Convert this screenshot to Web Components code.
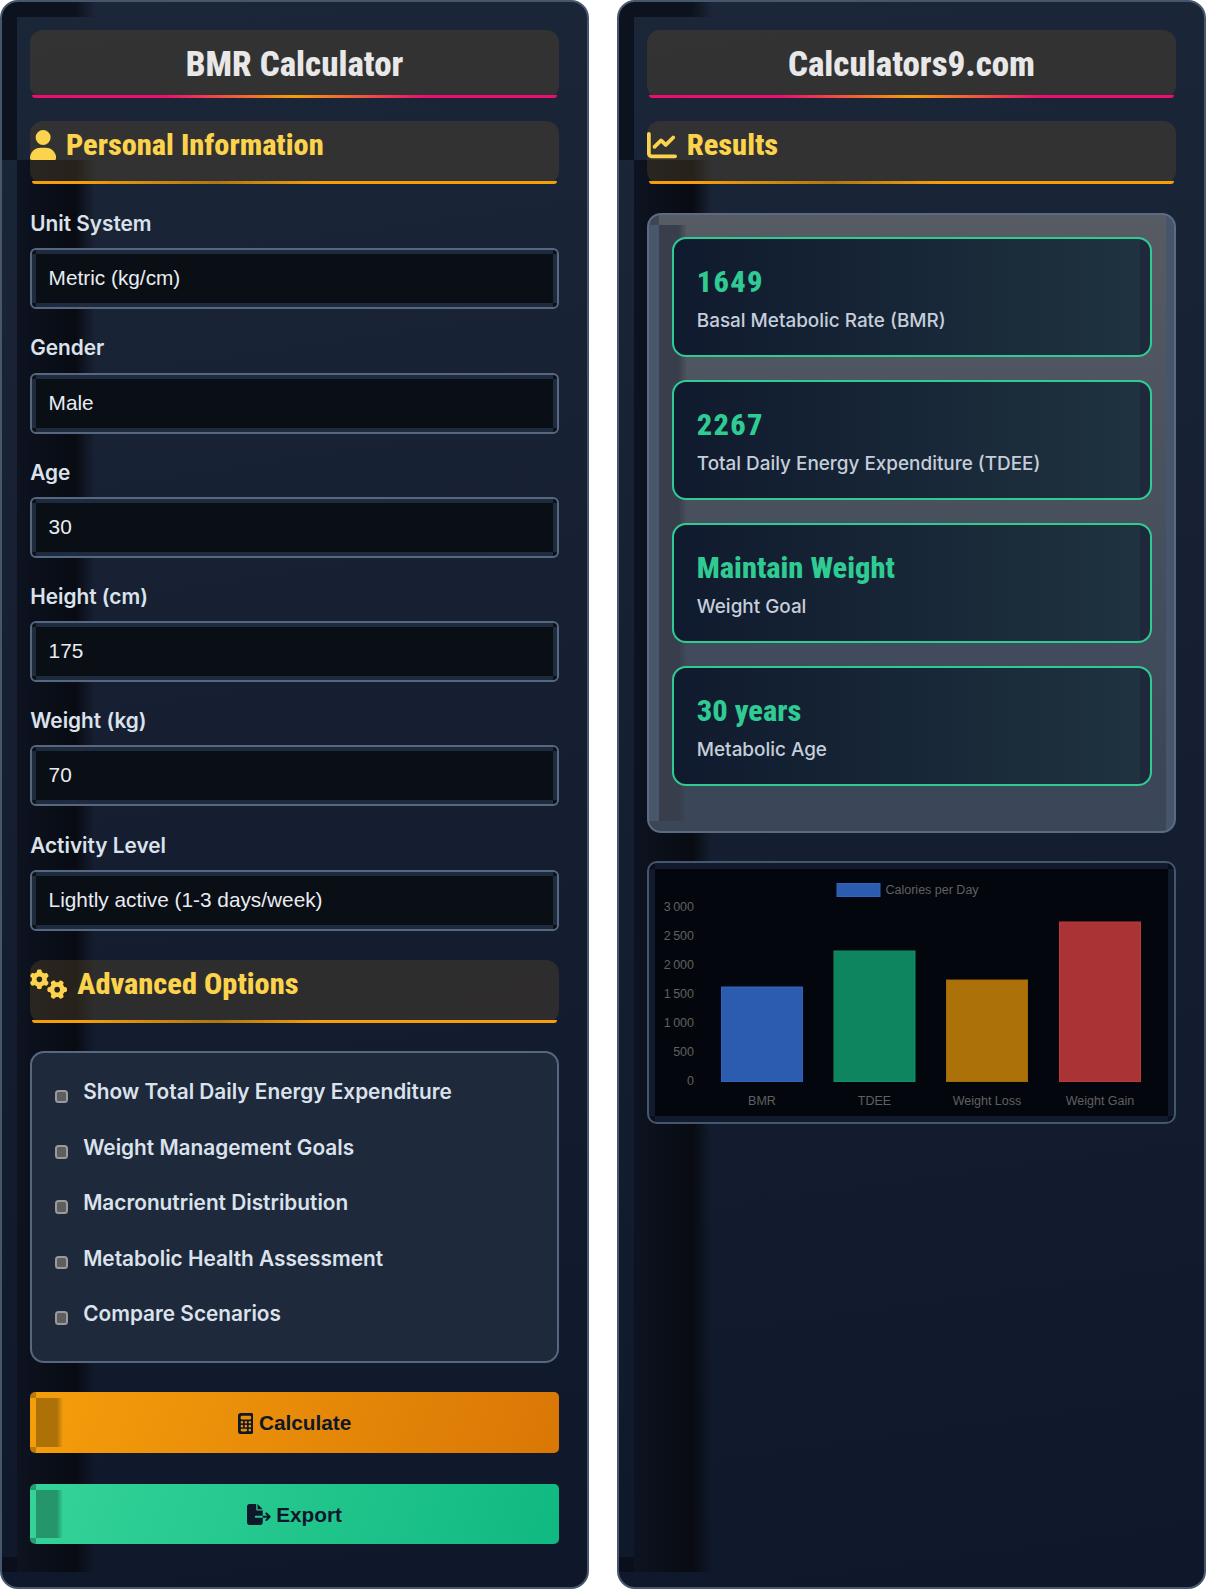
<!DOCTYPE html>
<html lang="en">
<head>
<meta charset="utf-8">
<title>BMR Calculator</title>
<style>
  html, body { margin: 0; padding: 0; background: #fff; }
  body { font-family: Inter, "Liberation Sans", sans-serif; }
  .page { display: grid; grid-template-columns: 589px 589px; gap: 28px; width: 1206px; height: 1589px; }
</style>
</head>
<body>
<div class="page">
  <calc-panel>
    <page-title>BMR Calculator</page-title>
    <section-title icon="user">Personal Information</section-title>
    <calc-field label="Unit System" value="Metric (kg/cm)"></calc-field>
    <calc-field label="Gender" value="Male"></calc-field>
    <calc-field label="Age" value="30"></calc-field>
    <calc-field label="Height (cm)" value="175"></calc-field>
    <calc-field label="Weight (kg)" value="70"></calc-field>
    <calc-field label="Activity Level" value="Lightly active (1-3 days/week)"></calc-field>
    <section-title icon="gears" style="margin-top:29px">Advanced Options</section-title>
    <option-list>
      <option-row>Show Total Daily Energy Expenditure</option-row>
      <option-row>Weight Management Goals</option-row>
      <option-row>Macronutrient Distribution</option-row>
      <option-row>Metabolic Health Assessment</option-row>
      <option-row>Compare Scenarios</option-row>
    </option-list>
    <action-button icon="calculator" kind="orange">Calculate</action-button>
    <action-button icon="export" kind="green">Export</action-button>
  </calc-panel>
  <calc-panel>
    <page-title>Calculators9.com</page-title>
    <section-title icon="chart">Results</section-title>
    <results-box>
      <result-card value="1649" digits>Basal Metabolic Rate (BMR)</result-card>
      <result-card value="2267" digits>Total Daily Energy Expenditure (TDEE)</result-card>
      <result-card value="Maintain Weight">Weight Goal</result-card>
      <result-card value="30 years">Metabolic Age</result-card>
    </results-box>
    <bar-chart></bar-chart>
  </calc-panel>
</div>

<script>
const ICONS = {
  user: ["0 0 448 512", "M224 256A128 128 0 1 0 224 0a128 128 0 1 0 0 256zm-45.7 48C79.8 304 0 383.8 0 482.3C0 498.7 13.3 512 29.7 512H418.3c16.4 0 29.7-13.3 29.7-29.7C448 383.8 368.2 304 269.7 304H178.3z"],
  chart: ["0 0 512 512", "M64 64c0-17.7-14.3-32-32-32S0 46.3 0 64V400c0 44.2 35.8 80 80 80H480c17.7 0 32-14.3 32-32s-14.3-32-32-32H80c-8.8 0-16-7.2-16-16V64zm406.6 86.6c12.5-12.5 12.5-32.8 0-45.3s-32.8-12.5-45.3 0L320 210.7l-57.4-57.4c-12.5-12.5-32.8-12.5-45.3 0l-112 112c-12.5 12.5-12.5 32.8 0 45.3s32.8 12.5 45.3 0L240 221.3l57.4 57.4c12.5 12.5 32.8 12.5 45.3 0l128-128z"],
  gears: ["0 0 640 512", "M308.5 135.3c7.1-6.3 9.9-16.2 6.2-25c-2.3-5.3-4.8-10.5-7.6-15.5L304 89.4c-3-5-6.3-9.9-9.8-14.6c-5.7-7.6-15.7-10.1-24.7-7.1l-28.2 9.3c-10.7-8.8-23-16-36.2-20.9L198 27.2c-1.9-9.3-9.1-16.7-18.5-17.8C173.9 8.9 167.2 8 160.4 8h-.7c-6.8 0-13.5 .4-20.1 1.2c-9.4 1.1-16.6 8.6-18.5 17.8L115 56.1c-13.3 5-25.5 12.1-36.2 20.9L50.5 67.8c-9-3-19-.5-24.7 7.1c-3.5 4.7-6.8 9.6-9.9 14.6l-3 5.3c-2.8 5-5.3 10.2-7.6 15.6c-3.7 8.7-.9 18.6 6.2 25l22.2 19.8C32.6 161.9 32 168.9 32 176s.6 14.1 1.7 20.9L11.5 216.7c-7.1 6.3-9.9 16.2-6.2 25c2.3 5.3 4.8 10.5 7.6 15.6l3 5.2c3 5.1 6.3 9.9 9.9 14.6c5.7 7.6 15.7 10.1 24.7 7.1l28.2-9.3c10.7 8.8 23 16 36.2 20.9l6.1 29.1c1.9 9.3 9.1 16.7 18.5 17.8c6.7 .8 13.5 1.2 20.4 1.2s13.7-.4 20.4-1.2c9.4-1.1 16.6-8.6 18.5-17.8l6.1-29.1c13.3-5 25.5-12.1 36.2-20.9l28.2 9.3c9 3 19 .5 24.7-7.1c3.5-4.7 6.8-9.5 9.8-14.6l3.1-5.4c2.8-5 5.3-10.2 7.6-15.5c3.7-8.7 .9-18.6-6.2-25l-22.2-19.8c1.1-6.8 1.7-13.8 1.7-20.9s-.6-14.1-1.7-20.9l22.2-19.8zM112 176a48 48 0 1 1 96 0 48 48 0 1 1 -96 0zM504.7 500.5c6.3 7.1 16.2 9.9 25 6.2c5.3-2.3 10.5-4.8 15.5-7.6l5.4-3.1c5-3 9.9-6.3 14.6-9.8c7.6-5.7 10.1-15.7 7.1-24.7l-9.3-28.2c8.8-10.7 16-23 20.9-36.2l29.1-6.1c9.3-1.9 16.7-9.1 17.8-18.5c.8-6.7 1.2-13.5 1.2-20.4s-.4-13.7-1.2-20.4c-1.1-9.4-8.6-16.6-17.8-18.5L583.9 307c-5-13.3-12.1-25.5-20.9-36.2l9.3-28.2c3-9 .5-19-7.1-24.7c-4.7-3.5-9.6-6.8-14.6-9.9l-5.3-3c-5-2.8-10.2-5.3-15.6-7.6c-8.7-3.7-18.6-.9-25 6.2l-19.8 22.2c-6.8-1.1-13.8-1.7-20.9-1.7s-14.1 .6-20.9 1.7l-19.8-22.2c-6.3-7.1-16.2-9.9-25-6.2c-5.3 2.3-10.5 4.8-15.6 7.6l-5.2 3c-5.1 3-9.9 6.3-14.6 9.9c-7.6 5.7-10.1 15.7-7.1 24.7l9.3 28.2c-8.8 10.7-16 23-20.9 36.2L315.1 313c-9.3 1.9-16.7 9.1-17.8 18.5c-.8 6.7-1.2 13.5-1.2 20.4s.4 13.7 1.2 20.4c1.1 9.4 8.6 16.6 17.8 18.5l29.1 6.1c5 13.3 12.1 25.5 20.9 36.2l-9.3 28.2c-3 9-.5 19 7.1 24.7c4.7 3.5 9.5 6.8 14.6 9.8l5.4 3.1c5 2.8 10.2 5.3 15.5 7.6c8.7 3.7 18.6 .9 25-6.2l19.8-22.2c6.8 1.1 13.8 1.7 20.9 1.7s14.1-.6 20.9-1.7l19.8 22.2zM464 304a48 48 0 1 1 0 96 48 48 0 1 1 0-96z"],
  calculator: ["0 0 384 512", "M64 0C28.7 0 0 28.7 0 64V448c0 35.3 28.7 64 64 64H320c35.3 0 64-28.7 64-64V64c0-35.3-28.7-64-64-64H64zM96 64H288c17.7 0 32 14.3 32 32v32c0 17.7-14.3 32-32 32H96c-17.7 0-32-14.3-32-32V96c0-17.7 14.3-32 32-32zm32 160a32 32 0 1 1 -64 0 32 32 0 1 1 64 0zM96 352a32 32 0 1 1 0-64 32 32 0 1 1 0 64zM64 416c0-17.7 14.3-32 32-32h96c17.7 0 32 14.3 32 32s-14.3 32-32 32H96c-17.7 0-32-14.3-32-32zM192 256a32 32 0 1 1 0-64 32 32 0 1 1 0 64zm32 64a32 32 0 1 1 -64 0 32 32 0 1 1 64 0zm64-64a32 32 0 1 1 0-64 32 32 0 1 1 0 64zm32 64a32 32 0 1 1 -64 0 32 32 0 1 1 64 0zM288 448a32 32 0 1 1 0-64 32 32 0 1 1 0 64z"],
  export: ["0 0 576 512", "M0 64C0 28.7 28.7 0 64 0H224V128c0 17.7 14.3 32 32 32H384V288H216c-13.3 0-24 10.7-24 24s10.7 24 24 24H384V448c0 35.3-28.7 64-64 64H64c-35.3 0-64-28.7-64-64V64zM384 336V288H494.1l-39-39c-9.4-9.4-9.4-24.6 0-33.9s24.6-9.4 33.9 0l80 80c9.4 9.4 9.4 24.6 0 33.9l-80 80c-9.4 9.4-24.6 9.4-33.9 0s-9.4-24.6 0-33.9l39-39H384zm0-208H256V0L384 128z"]
};

function iconSvg(name, height) {
  const [box, d] = ICONS[name];
  return `<svg viewBox="${box}" height="${height}" fill="currentColor" aria-hidden="true"><path d="${d}"/></svg>`;
}

// flat rectangle layer for a background stack
const rect = (c, x, y, w, h) => `linear-gradient(${c},${c}) ${x} ${y} / ${w} ${h} no-repeat`;

class Base extends HTMLElement {
  constructor() {
    super();
    this.attachShadow({ mode: "open" });
  }
}

class CalcPanel extends Base {
  connectedCallback() {
    const d = "#0d131e";
    this.shadowRoot.innerHTML = `
      <style>
        :host {
          display: block; box-sizing: border-box; height: 1589px;
          padding: 28.1px 28.2px; border: 2px solid #46566c; border-radius: 18px;
          color: #e2e8f0; overflow: hidden;
          background:
            ${rect(d, "0", "0", "15px", "158px")},
            linear-gradient(90deg,${d} 75%,transparent) 15px 0 / 78px 15px no-repeat,
            linear-gradient(90deg,#0d1320 0,#080b12 75%,transparent) 15px 158px / 78px calc(100% - 173px) no-repeat,
            ${rect("#0a0f1b", "0", "calc(100% - 15px)", "15px", "15px")},
            linear-gradient(172deg,#1c2639,#0f172a);
        }
      </style>
      <slot></slot>`;
  }
}

class PageTitle extends Base {
  connectedCallback() {
    this.shadowRoot.innerHTML = `
      <style>
        :host {
          display: block; height: 68px; box-sizing: border-box; border-radius: 13px;
          background: rgba(94,76,42,.36); text-align: center; position: relative;
          font: 800 35px/70px "Roboto Condensed", Roboto, sans-serif; font-stretch: 75%;
          color: #e8e8e8; margin-bottom: 23px;
        }
        i { position: absolute; left: 2px; right: 2px; bottom: 0; height: 3px; border-radius: 0 0 5px 5px;
            background: linear-gradient(90deg,#ec0e6f 25%,#f59e0b 50%,#ec0e6f 75%); }
      </style>
      <slot></slot><i></i>`;
  }
}

class SectionTitle extends Base {
  connectedCallback() {
    this.shadowRoot.innerHTML = `
      <style>
        :host {
          display: flex; align-items: flex-start; gap: 9.5px; height: 63px; box-sizing: border-box;
          border-radius: 13px; background: rgba(94,76,42,.36); position: relative;
          font: 800 30.4px/48px "Roboto Condensed", Roboto, sans-serif; font-stretch: 75%;
          color: #fcd34d; margin-bottom: 27px;
        }
        svg { display: block; margin-top: 9px; }
        i { position: absolute; left: 2px; right: 2px; bottom: 0; height: 3px; border-radius: 0 0 5px 5px;
            background: linear-gradient(90deg,#f59e0b 10%,#b07710 35%,#f59e0b 55%); }
      </style>
      ${iconSvg(this.getAttribute("icon"), 30)}<span><slot></slot></span><i></i>`;
  }
}

class CalcField extends Base {
  connectedCallback() {
    const c = "#0a0e15";
    this.shadowRoot.innerHTML = `
      <style>
        :host { display: block; margin-bottom: 26.1px; }
        label { display: block; font: 600 20.8px/25px Inter, sans-serif; color: #dbe2ec; margin-bottom: 12.2px; }
        .box {
          box-sizing: border-box; height: 61px; padding: 0 16.4px;
          border: 2px solid #56677f; border-radius: 6px;
          font: 400 20.8px/56px "Liberation Sans", sans-serif; color: #e8ecf2;
          background:
            ${rect("#0b0f16", "0", "0", "4px", "4px")},
            ${rect("#0b0f16", "100%", "0", "4px", "4px")},
            ${rect("#0b0f16", "0", "100%", "4px", "4px")},
            ${rect("#0b0f16", "100%", "100%", "4px", "4px")},
            ${rect(c, "4px", "4px", "calc(100% - 8px)", "calc(100% - 8px)")},
            #1e2a3d;
        }
      </style>
      <label>${this.getAttribute("label")}</label>
      <div class="box">${this.getAttribute("value")}</div>`;
  }
}

class OptionList extends Base {
  connectedCallback() {
    this.shadowRoot.innerHTML = `
      <style>
        :host {
          display: block; box-sizing: border-box; height: 312px; margin: 28.5px 0 29px;
          padding: 12px 22.5px; border: 2px solid #56677f; border-radius: 14px; background: #1e293b;
        }
      </style>
      <slot></slot>`;
  }
}

class OptionRow extends Base {
  connectedCallback() {
    this.shadowRoot.innerHTML = `
      <style>
        :host {
          display: flex; align-items: center; gap: 15px; height: 55.4px;
          font: 600 20.8px/25px Inter, sans-serif; color: #dbe2ec;
        }
        b { box-sizing: border-box; width: 13.5px; height: 13.5px; margin-top: 7px; flex: none;
            border: 2.5px solid #9a9a9a; border-radius: 3.5px; background: #5e5e5e; }
        span { margin-top: -2px; }
      </style>
      <b></b><span><slot></slot></span>`;
  }
}

class ActionButton extends Base {
  connectedCallback() {
    const orange = this.getAttribute("kind") === "orange";
    const band = orange ? "#ae7108" : "#25966c";
    const grad = orange ? "linear-gradient(110deg,#f59e0b,#d97706)" : "linear-gradient(110deg,#34d399,#10b981)";
    const corner = orange ? "#b97a0a" : "#279b70";
    this.shadowRoot.innerHTML = `
      <style>
        :host {
          display: flex; align-items: center; justify-content: center; gap: 5.5px;
          height: 60.5px; box-sizing: border-box; padding-top: 2px; margin-bottom: 31px; border-radius: 5px;
          font: 700 20.8px/1 "Liberation Sans", sans-serif; color: #0f172a;
          background:
            ${rect(corner, "0", "0", "6px", "6px")},
            ${rect(corner, "0", "100%", "6px", "6px")},
            linear-gradient(90deg,${band} 78%,transparent) 6px 6px / 27px calc(100% - 12px) no-repeat,
            ${grad};
        }
      </style>
      ${iconSvg(this.getAttribute("icon"), 21)}<span><slot></slot></span>`;
  }
}

class ResultsBox extends Base {
  connectedCallback() {
    this.shadowRoot.innerHTML = `
      <style>
        :host {
          display: block; box-sizing: border-box; height: 620px; margin-top: 28.5px; padding: 22.5px 22px 0 23px;
          border: 2px solid #5a6b83; border-radius: 14px;
          background:
            ${rect("#3f4653", "0", "0", "10px", "10px")},
            ${rect("#4a5669", "0", "10px", "10px", "calc(100% - 20px)")},
            linear-gradient(90deg,#383e4b 70%,transparent) 10px 10px / 28px calc(100% - 20px) no-repeat,
            ${rect("#3e4654", "0", "100%", "10px", "10px")},
            ${rect("#46556b", "100%", "0", "8px", "100%")},
            linear-gradient(#575b63,#3b4759 90%);
        }
      </style>
      <slot></slot>`;
  }
}

class ResultCard extends Base {
  connectedCallback() {
    const spacing = this.hasAttribute("digits") ? "1.3px" : "0";
    this.shadowRoot.innerHTML = `
      <style>
        :host {
          display: block; box-sizing: border-box; height: 120px; margin-bottom: 23px; padding: 21.5px 22.6px;
          border: 2px solid #2fcb93; border-radius: 14px;
          background:
            ${rect("#1e293b", "100%", "0", "10px", "100%")},
            linear-gradient(90deg,#101a2e,#1f3340);
        }
        .v { font: 800 30.4px/42px "Roboto Condensed", Roboto, sans-serif; font-stretch: 75%; color: #2fcb93; letter-spacing: ${spacing}; }
        .l { font: 500 18.9px/28px Inter, sans-serif; color: #c5ceda; margin-top: 4px; }
      </style>
      <div class="v">${this.getAttribute("value")}</div>
      <div class="l"><slot></slot></div>`;
  }
}

class BarChart extends Base {
  connectedCallback() {
    // x/y measured from the chart box's outer corner (647.5, 862)
    const bars = [
      { x: 73.5, top: 125, name: "BMR", fill: "#2c5cb0", line: "#3064be" },
      { x: 186, top: 89, name: "TDEE", fill: "#0e855f", line: "#0f9068" },
      { x: 298.5, top: 118, name: "Weight Loss", fill: "#ac7109", line: "#a06a08" },
      { x: 411.5, top: 60, name: "Weight Gain", fill: "#aa3335", line: "#bd3a3c" }
    ];
    const bottom = 219.5;
    const ticks = ["3\u202f000", "2\u202f500", "2\u202f000", "1\u202f500", "1\u202f000", "500", "0"];
    const rects = bars.map(b => `<rect x="${b.x}" y="${b.top}" width="81" height="${bottom - b.top}" fill="${b.fill}" stroke="${b.line}" stroke-width="1"/>
      <text x="${b.x + 40.5}" y="243" text-anchor="middle">${b.name}</text>`).join("");
    const labels = ticks.map((t, i) => `<text x="46" y="${48.5 + i * 29.1}" text-anchor="end">${t}</text>`).join("");
    this.shadowRoot.innerHTML = `
      <style>
        :host {
          display: block; box-sizing: border-box; height: 263px; margin-top: 28.5px;
          border: 2px solid #46566c; border-radius: 10px; overflow: hidden;
          background:
            ${rect("#0a0f19", "0", "0", "6px", "6px")},
            ${rect("#0a0f19", "100%", "0", "6px", "6px")},
            ${rect("#0a0f19", "0", "100%", "6px", "6px")},
            ${rect("#0a0f19", "100%", "100%", "6px", "6px")},
            ${rect("#03060d", "6px", "6px", "calc(100% - 12px)", "calc(100% - 12px)")},
            #121b2e;
        }
        svg { display: block; margin: -1px -2px -2px -1.5px; }
        text { font: 12.5px "Liberation Sans", sans-serif; fill: #606060; }
      </style>
      <svg width="529" height="262" viewBox="0 0 529 262">
        <rect x="189" y="21.5" width="43" height="13" fill="#2c5cb0" stroke="#3064be"/>
        <text x="237.5" y="32">Calories per Day</text>
        ${labels}
        ${rects}
      </svg>`;
  }
}

customElements.define("calc-panel", CalcPanel);
customElements.define("page-title", PageTitle);
customElements.define("section-title", SectionTitle);
customElements.define("calc-field", CalcField);
customElements.define("option-list", OptionList);
customElements.define("option-row", OptionRow);
customElements.define("action-button", ActionButton);
customElements.define("results-box", ResultsBox);
customElements.define("result-card", ResultCard);
customElements.define("bar-chart", BarChart);
</script>
</body>
</html>
